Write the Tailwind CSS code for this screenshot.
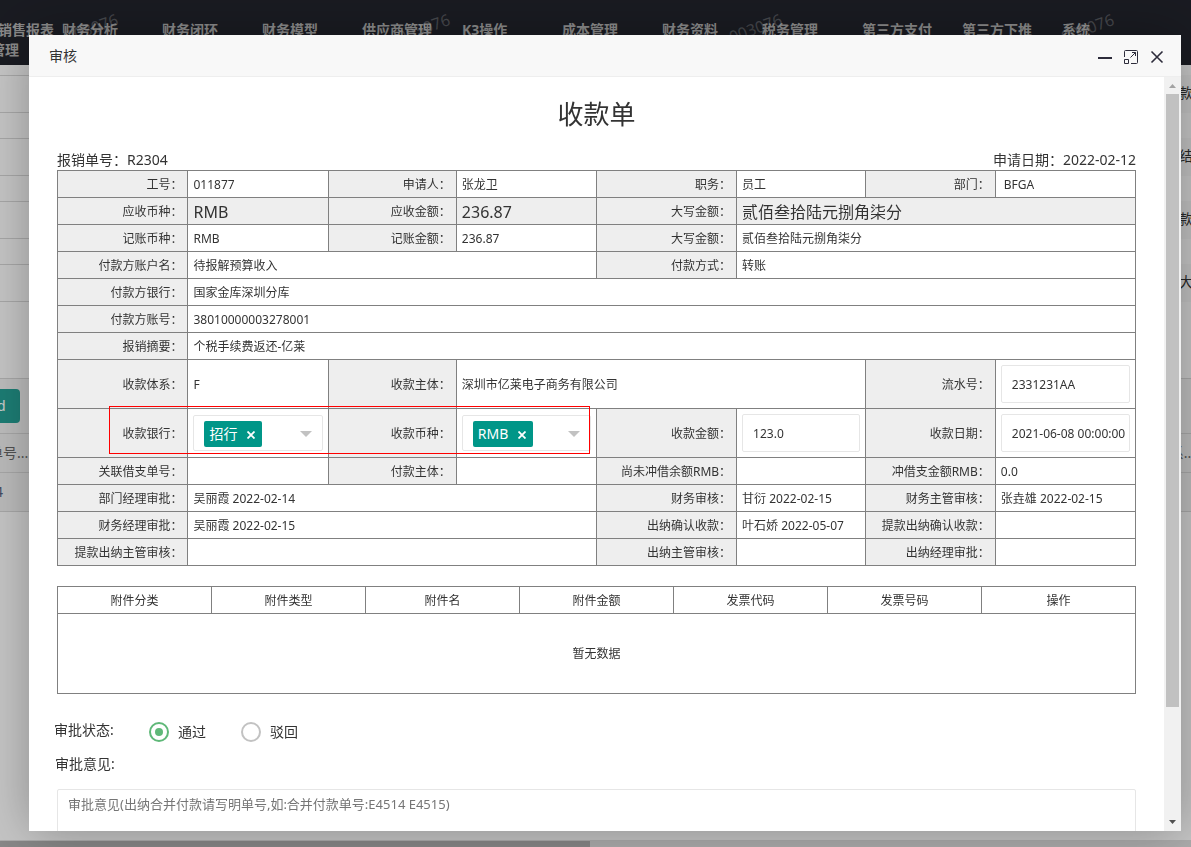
<!DOCTYPE html>
<html lang="zh-CN">
<head>
<meta charset="utf-8">
<title>审核 - 收款单</title>
<script src="https://cdn.jsdelivr.net/npm/@tailwindcss/browser@4"></script>
</head>
<body class="h-screen overflow-hidden bg-[#f7f7f7] font-['Noto_Sans','Noto_Sans_CJK_SC',sans-serif] text-sm text-[#333]">

<!-- Page behind the dialog -->
<div class="flex h-screen flex-col overflow-hidden">
  <nav class="relative flex h-[65px] shrink-0 overflow-hidden bg-[#20222a] pt-5 leading-5 font-bold whitespace-nowrap text-[#acacac]">
    <div class="w-[62px] shrink-0">
      <a href="#" class="-ml-0.5 block">销售报表</a>
      <a href="#" class="-ml-[9px] block">管理</a>
    </div>
    <a href="#" class="w-[100px] shrink-0">财务分析</a>
    <a href="#" class="w-[100px] shrink-0">财务闭环</a>
    <a href="#" class="w-[100px] shrink-0">财务模型</a>
    <a href="#" class="w-[100px] shrink-0">供应商管理</a>
    <a href="#" class="w-[100px] shrink-0">K3操作</a>
    <a href="#" class="w-[100px] shrink-0">成本管理</a>
    <a href="#" class="w-[100px] shrink-0">财务资料</a>
    <a href="#" class="w-[100px] shrink-0">税务管理</a>
    <a href="#" class="w-[100px] shrink-0">第三方支付</a>
    <a href="#" class="w-[100px] shrink-0">第三方下推</a>
    <a href="#" class="w-[100px] shrink-0">系统</a>
    <span class="absolute top-4 left-[64px] -rotate-20 text-base font-normal text-white/25">003076</span>
    <span class="absolute top-4 left-[396px] -rotate-20 text-base font-normal text-white/25">003076</span>
    <span class="absolute top-4 left-[728px] -rotate-20 text-base font-normal text-white/25">003076</span>
    <span class="absolute top-4 left-[1060px] -rotate-20 text-base font-normal text-white/25">003076</span>
  </nav>
  <div class="flex h-[313px] shrink-0 flex-col gap-[25px] pt-2.5">
    <div class="flex h-[38px] items-center"><div class="h-full flex-1 border-y border-[#d2d2d2]"></div><span class="h-full w-3 overflow-hidden bg-[#f1f1f1] leading-9 whitespace-nowrap">款日期</span></div>
    <div class="flex h-[38px] items-center"><div class="h-full flex-1 border-y border-[#d2d2d2]"></div><span class="h-full w-3 overflow-hidden bg-[#f1f1f1] leading-9 whitespace-nowrap">结算</span></div>
    <div class="flex h-[38px] items-center"><div class="h-full flex-1 border-y border-[#d2d2d2]"></div><span class="h-full w-3 overflow-hidden bg-[#f1f1f1] leading-9 whitespace-nowrap">款金额</span></div>
    <div class="flex h-[38px] items-center"><div class="h-full flex-1 border-y border-[#d2d2d2]"></div><span class="h-full w-3 overflow-hidden bg-[#f1f1f1] leading-9 whitespace-nowrap">大写</span></div>
  </div>
  <div class="flex h-[55px] shrink-0 items-center border-t border-[#d2d2d2] bg-[#ededed]">
    <button class="h-[34px] w-5 overflow-hidden rounded-r-sm bg-[#249d92] text-left -indent-[3px] text-white">d</button>
  </div>
  <div class="flex h-[39px] shrink-0 items-center justify-between border-t border-[#d2d2d2] bg-[#ebebeb] text-[#666]">
    <span class="-ml-[11px]">单号...</span><span class="-mr-1 flex w-4 justify-end overflow-hidden whitespace-nowrap">系...</span>
  </div>
  <div class="flex h-10 shrink-0 items-center border-y border-[#d2d2d2] bg-[#ebebeb] text-[#55607a]"><a href="#" class="-ml-[5px]">4</a></div>
  <div class="mt-auto h-[7px] border-t border-[#d8d8d8] bg-[#d8d8d8]"><div class="h-1.5 w-[49.5%] bg-[#a9a9a9]"></div></div>
</div>
<div class="fixed inset-0 bg-black/20"></div>

<!-- Review dialog -->
<section role="dialog" aria-label="审核" class="fixed top-[35px] right-[10px] bottom-4 left-[29px] flex flex-col bg-white shadow-[1px_1px_50px_rgba(0,0,0,0.3)]">
  <header class="flex h-[42px] shrink-0 items-center justify-between rounded-t-sm border-b border-[#eee] bg-[#f8f8f8] pr-4 pl-5">
    <span>审核</span>
    <div class="flex items-center gap-[10px] pt-0.5 text-[#2d2c3b]">
      <button aria-label="最小化" class="size-4"><svg viewBox="0 0 16 16" class="size-4" fill="currentColor"><path d="M1 8h14v2H1z"/></svg></button>
      <button aria-label="最大化" class="size-4"><svg viewBox="0 0 16 16" class="size-4" fill="none" stroke="currentColor"><path d="M1.500 8V2.500Q1.500 1.500 2.500 1.500H13.500Q14.500 1.500 14.500 2.500V13.500Q14.500 14.500 13.500 14.500H8M1.500 10.500h4v4h-4zM7.500 8.500l5-5M9 3.500h3.500V7"/></svg></button>
      <button aria-label="关闭" class="size-4"><svg viewBox="0 0 16 16" class="size-4" fill="none" stroke="currentColor" stroke-width="1.600"><path d="M2.500 2.500l11 11M13.500 2.500l-11 11"/></svg></button>
    </div>
  </header>

  <div class="flex min-h-0 flex-1">
    <div class="min-w-0 flex-1 overflow-hidden px-7 pt-[19px]">
      <h1 class="text-center text-[26px] leading-9">收款单</h1>
      <div class="mt-[18px] flex justify-between leading-5"><span>报销单号：R2304</span><span>申请日期：2022-02-12</span></div>

      <div class="relative">
        <table class="w-full table-fixed border-collapse text-xs leading-4 [&_td]:border [&_td]:border-[#808080] [&_td]:px-[5px] [&_td]:pt-0.5 [&_td]:pb-0 [&_th]:border [&_th]:border-[#808080] [&_th]:bg-[#eee] [&_th]:px-[5px] [&_th]:pt-0.5 [&_th]:pb-0 [&_th]:text-right [&_th]:font-normal">
          <colgroup><col class="w-[12.1%]"><col class="w-[13%]"><col class="w-[11.9%]"><col class="w-[13%]"><col class="w-[13%]"><col class="w-[12%]"><col class="w-[12%]"><col class="w-[13%]"></colgroup>
          <tbody>
            <tr class="h-[27px]"><th>工号：</th><td>011877</td><th>申请人：</th><td>张龙卫</td><th>职务：</th><td>员工</td><th>部门：</th><td><span class="pl-[3px]">BFGA</span></td></tr>
            <tr class="h-[27px] bg-[#eee]"><th>应收币种：</th><td class="text-base leading-5">RMB</td><th>应收金额：</th><td class="text-base leading-5">236.87</td><th>大写金额：</th><td colspan="3" class="text-base leading-5">贰佰叁拾陆元捌角柒分</td></tr>
            <tr class="h-[27px]"><th>记账币种：</th><td>RMB</td><th>记账金额：</th><td>236.87</td><th>大写金额：</th><td colspan="3">贰佰叁拾陆元捌角柒分</td></tr>
            <tr class="h-[27px]"><th>付款方账户名：</th><td colspan="3">待报解预算收入</td><th>付款方式：</th><td colspan="3">转账</td></tr>
            <tr class="h-[27px]"><th>付款方银行：</th><td colspan="7">国家金库深圳分库</td></tr>
            <tr class="h-[27px]"><th>付款方账号：</th><td colspan="7">38010000003278001</td></tr>
            <tr class="h-[27px]"><th>报销摘要：</th><td colspan="7">个税手续费返还-亿莱</td></tr>
            <tr class="h-[49px]"><th>收款体系：</th><td>F</td><th>收款主体：</th><td colspan="3">深圳市亿莱电子商务有限公司</td><th><label for="serial">流水号：</label></th><td class="pb-0.5!"><input id="serial" value="2331231AA" class="block h-[38px] w-full rounded-xs border border-[#e6e6e6] pl-[10px]"></td></tr>
            <tr class="h-[49px]">
              <th><label for="bank">收款银行：</label></th>
              <td class="pb-0.5!">
                <div class="relative flex h-9 items-center justify-between rounded-xs border border-[#e6e6e6] px-[10px] pt-0.5">
                  <select id="bank" class="absolute inset-0 size-full opacity-0"><option>招行</option></select>
                  <span class="relative flex h-[26px] items-center gap-[10px] rounded-xs bg-[#009688] px-[5px] text-sm leading-5 text-white">招行<button aria-label="移除招行" class="pr-0.5"><svg viewBox="0 0 8 8" class="mt-0.5 size-2" fill="none" stroke="currentColor" stroke-width="1.800"><path d="M.5.5l7 7M7.500.5l-7 7"/></svg></button></span>
                  <svg viewBox="0 0 12 6" class="h-1.5 w-3" fill="#c2c2c2"><path d="M0 0h12L6 6z"/></svg>
                </div>
              </td>
              <th><label for="currency">收款币种：</label></th>
              <td class="pb-0.5!">
                <div class="relative flex h-9 items-center justify-between rounded-xs border border-[#e6e6e6] px-[10px] pt-0.5">
                  <select id="currency" class="absolute inset-0 size-full opacity-0"><option>RMB</option></select>
                  <span class="relative flex h-[26px] items-center gap-[10px] rounded-xs bg-[#009688] px-[5px] text-sm leading-5 text-white">RMB<button aria-label="移除RMB" class="pr-0.5"><svg viewBox="0 0 8 8" class="mt-0.5 size-2" fill="none" stroke="currentColor" stroke-width="1.800"><path d="M.5.5l7 7M7.500.5l-7 7"/></svg></button></span>
                  <svg viewBox="0 0 12 6" class="h-1.5 w-3" fill="#c2c2c2"><path d="M0 0h12L6 6z"/></svg>
                </div>
              </td>
              <th><label for="amount">收款金额：</label></th><td class="pb-0.5!"><input id="amount" value="123.0" class="block h-[38px] w-full rounded-xs border border-[#e6e6e6] pl-[10px]"></td>
              <th><label for="date">收款日期：</label></th><td class="pb-0.5!"><input id="date" value="2021-06-08 00:00:00" class="block h-[38px] w-full rounded-xs border border-[#e6e6e6] pl-[10px]"></td>
            </tr>
            <tr class="h-[27px]"><th>关联借支单号：</th><td></td><th>付款主体：</th><td></td><th>尚未冲借余额RMB：</th><td></td><th>冲借支金额RMB：</th><td>0.0</td></tr>
            <tr class="h-[27px]"><th>部门经理审批：</th><td colspan="3">吴丽霞 2022-02-14</td><th>财务审核：</th><td>甘衍 2022-02-15</td><th>财务主管审核：</th><td>张垚雄 2022-02-15</td></tr>
            <tr class="h-[27px]"><th>财务经理审批：</th><td colspan="3">吴丽霞 2022-02-15</td><th>出纳确认收款：</th><td>叶石娇 2022-05-07</td><th>提款出纳确认收款：</th><td></td></tr>
            <tr class="h-[27px]"><th>提款出纳主管审核：</th><td colspan="3"></td><th>出纳主管审核：</th><td></td><th>出纳经理审批：</th><td></td></tr>
          </tbody>
        </table>
        <!-- Highlight around the bank and currency fields -->
        <div class="pointer-events-none absolute top-[236px] left-[4.8%] z-10 h-12 w-[44.6%] border border-[#ff0000]"></div>
      </div>

      <table class="mt-5 w-full table-fixed border-collapse text-center text-xs leading-4 [&_td]:border [&_td]:border-[#808080] [&_th]:border [&_th]:border-[#808080] [&_th]:px-0 [&_th]:pt-0.5 [&_th]:pb-0 [&_th]:font-normal">
        <thead><tr class="h-[27px]"><th>附件分类</th><th>附件类型</th><th>附件名</th><th>附件金额</th><th>发票代码</th><th>发票号码</th><th>操作</th></tr></thead>
        <tbody><tr class="h-20"><td colspan="7">暂无数据</td></tr></tbody>
      </table>

      <form>
        <fieldset class="mt-[26px] -ml-[3px] flex items-start leading-5">
          <legend class="float-left w-[95px]">审批状态:</legend>
          <label class="flex w-[92px] items-center gap-[9px] pt-0.5"><input type="radio" name="status" checked class="grid size-5 appearance-none place-content-center rounded-full border-2 border-[#c2c2c2] before:size-2 before:rounded-full checked:border-[#5fb878] checked:before:bg-[#5fb878]">通过</label>
          <label class="flex items-center gap-[9px] pt-0.5"><input type="radio" name="status" class="grid size-5 appearance-none place-content-center rounded-full border-2 border-[#c2c2c2] before:size-2 before:rounded-full checked:border-[#5fb878] checked:before:bg-[#5fb878]">驳回</label>
        </fieldset>
        <label for="opinion" class="mt-3 -ml-[2px] block leading-5">审批意见:</label>
        <textarea id="opinion" placeholder="审批意见(出纳合并付款请写明单号,如:合并付款单号:E4514 E4515)" class="mt-[15px] block h-[100px] w-full resize-none rounded-xs border border-[#e6e6e6] px-[10px] py-1 text-[13px] leading-5 placeholder:text-[#757575]"></textarea>
      </form>
    </div>

    <!-- Scrollbar -->
    <div class="flex w-[17px] shrink-0 flex-col items-center bg-[#f1f1f1]">
      <svg viewBox="0 0 17 17" class="size-[17px] shrink-0" fill="#a3a3a3"><path d="M5 11l3.500-4 3.500 4z"/></svg>
      <div class="min-h-0 w-[13px] flex-1"><div class="h-[85.200%] bg-[#c1c1c1]"></div></div>
      <svg viewBox="0 0 17 17" class="size-[17px] shrink-0" fill="#505050"><path d="M5 6l3.500 4L12 6z"/></svg>
    </div>
  </div>
</section>
</body>
</html>
